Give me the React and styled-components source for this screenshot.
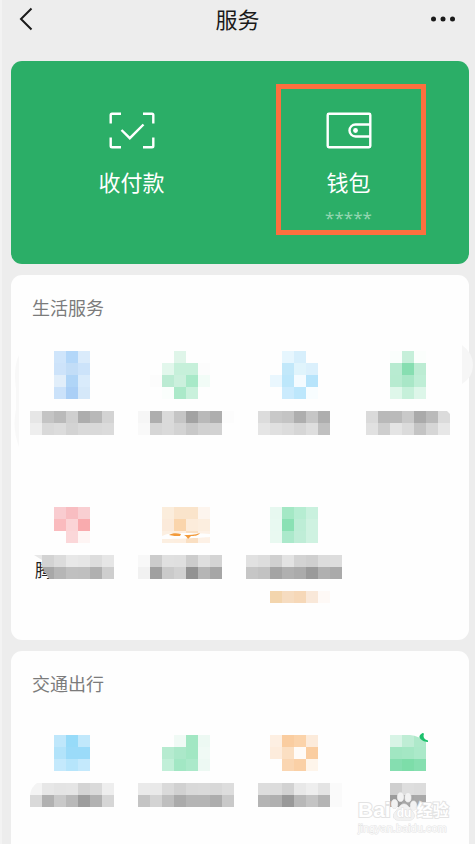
import React from 'react'
import styled, { createGlobalStyle } from 'styled-components'

const colors = {
  page: '#ededed',
  card: '#fefefe',
  green: '#2bae67',
  highlight: '#fd6f3e',
  text: '#1a1a1a',
  muted: '#7b7b7b',
  masked: '#93d6b0',
}

const CELL = 12

const GlobalStyle = createGlobalStyle`
  * {
    box-sizing: border-box;
  }

  body {
    margin: 0;
    background: ${colors.page};
    font-family: 'Noto Sans CJK SC', sans-serif;
    color: ${colors.text};
  }

  button {
    border: 0;
    padding: 0;
    background: none;
    font: inherit;
    color: inherit;
    cursor: pointer;
  }
`

const Page = styled.div`
  min-height: 100vh;
  display: flex;
  flex-direction: column;
  box-shadow: inset 2px 0 #f3f3f3;
`

const TopBar = styled.header`
  display: grid;
  grid-template-columns: 48px 1fr 48px;
  align-items: start;
  height: 61px;
`

const Title = styled.h1`
  margin: 0;
  padding-top: 2px;
  font-size: 22px;
  font-weight: 400;
  line-height: 32px;
  text-align: center;
`

const BarButton = styled.button`
  display: flex;
  align-items: center;
  justify-content: ${(props) => (props.$end ? 'flex-end' : 'flex-start')};
  height: 37px;
  padding: ${(props) => (props.$end ? '0 20px 0 0' : '0 0 0 18px')};
`

const Content = styled.main`
  flex: 1;
  display: flex;
  flex-direction: column;
  gap: 11px;
  padding: 0 6px 0 11px;
`

const PayCard = styled.section`
  display: grid;
  grid-template-columns: 1fr 1fr;
  padding: 48px 12px 34px;
  border-radius: 11px;
  background: ${colors.green};
  color: #fff;
`

const PayItem = styled.button`
  position: relative;
  display: flex;
  flex-direction: column;
  align-items: center;

  svg {
    display: block;
  }
`

const PayLabel = styled.span`
  margin-top: 12px;
  font-size: 22px;
  line-height: 32px;
`

const Balance = styled.span`
  margin-top: 9px;
  font-family: 'Noto Sans', sans-serif;
  font-size: 17px;
  line-height: 24px;
  color: ${colors.masked};
`

/* Frame that points at the wallet entry */
const Highlight = styled.span`
  position: absolute;
  top: -25px;
  left: 50%;
  width: 150px;
  height: 151px;
  margin-left: -73px;
  border: 5px solid ${colors.highlight};
  pointer-events: none;
`

const Card = styled.section`
  position: relative;
  flex: ${(props) => (props.$last ? '1' : 'none')};
  padding: 20px 19px 1px 7px;
  border-radius: ${(props) => (props.$last ? '11px 11px 0 0' : '11px')};
  background: ${colors.card};
`

const CardTitle = styled.h2`
  margin: 0 0 ${(props) => (props.$last ? '28px' : '32px')} 14px;
  font-size: 18px;
  font-weight: 400;
  line-height: 24px;
  color: ${colors.muted};
`

const ServiceGrid = styled.div`
  display: grid;
  grid-template-columns: repeat(4, 1fr);
`

const ServiceButton = styled.button`
  position: relative;
  min-width: 0;
`

const Mosaic = styled.svg`
  display: block;
  width: 100%;
  height: auto;
  overflow: visible;
`

const EdgeBlur = styled.svg`
  position: absolute;
  top: 70px;
  ${(props) => (props.$right ? 'right: -4px;' : 'left: 2px;')}
`

const Watermark = styled.div`
  position: absolute;
  top: 64px;
  left: 16px;
  display: flex;
  flex-direction: column;
  align-items: flex-start;
  color: #fff;
  -webkit-text-stroke: 2px #e3e3e3;
  paint-order: stroke fill;
  font-family: 'Liberation Sans', 'Noto Sans CJK SC', sans-serif;
  white-space: nowrap;
  pointer-events: none;
`

const WatermarkRow = styled.div`
  display: flex;
  align-items: flex-end;
  height: 34px;
  font-size: 21px;
  line-height: 20px;

  b {
    line-height: 22px;
  }

  span {
    font-size: 16px;
    font-weight: 700;
  }
`

const WatermarkUrl = styled.div`
  font-size: 11px;
  line-height: 14px;
  color: #fcfcfc;
  -webkit-text-stroke: 1px #e4e4e4;
`

// Each mosaic row: [row index, first column, colours]
const lifeServices = [
  {
    name: '生活服务 1',
    rows: [
      [0, 3, ['#cfe5fb', '#b3d7f9', '#daebfb']],
      [1, 3, ['#cde3fa', '#c2ddf7', '#cce3fa']],
      [2, 3, ['#e1eefa', '#b0d5f7', '#d9ebfb']],
      [3, 3, ['#cbe2fa', '#aacff6', '#d5e8f9']],
      [5, 1, ['#e6e6e6', '#c4c4c4', '#bababa', '#cfcfcf', '#adadad', '#b8b8b8', '#d3d3d3']],
      [6, 1, ['#eeeeee', '#d9d9d9', '#dcdcdc', '#d3d3d3', '#d9d9d9', '#d9d9d9', '#dbdbdb']],
    ],
  },
  {
    name: '生活服务 2',
    rows: [
      [0, 4, ['#dff5e9']],
      [1, 3, ['#e2f7ec', '#c6f0da', '#c6f0da', '#fcfcfc']],
      [2, 2, ['#fcfcfc', '#bbebd3', '#cbf0dd', '#a8e9c8', '#f2fcf7']],
      [3, 3, ['#fafefc', '#abe9c9', '#c9f1dc']],
      [5, 1, ['#f6f6f6', '#aeaeae', '#dadada', '#c5c5c5', '#a2a2a2', '#b9b9b9', '#aeaeae', '#fcfcfc']],
      [6, 1, ['#f9f9f9', '#d6d6d6', '#dadada', '#d3d3d3', '#c8c8c8', '#d1d1d1', '#d2d2d2']],
    ],
  },
  {
    name: '生活服务 3',
    rows: [
      [0, 4, ['#e6f6fe', '#d7effc']],
      [1, 4, ['#c2e8fa', '#e0f4fc', '#dbf0fc']],
      [2, 3, ['#eaf7fe', '#bde7fb', '#f4fbff', '#b7e4fb']],
      [3, 4, ['#cbebfd', '#bde7fc', '#f8fdff']],
      [5, 2, ['#dcdcdc', '#c8c8c8', '#c4c4c4', '#aeaeae', '#c6c6c6', '#aeaeae']],
      [6, 2, ['#e5e5e5', '#e0e0e0', '#dcdcdc', '#d6d6d6', '#dedede', '#c0c0c0']],
    ],
  },
  {
    name: '生活服务 4',
    rows: [
      [0, 4, ['#fafefc', '#c6efda', '#fbfefc']],
      [1, 4, ['#b8ebd1', '#87deb1', '#bcecd3']],
      [2, 4, ['#b7ebd0', '#a9e7c7', '#bfeed6']],
      [3, 4, ['#dff7ea', '#c6f0da', '#ddf6e9']],
      [5, 2, ['#dadada', '#b9b9b9', '#bababa', '#c9c9c9', '#aaaaaa', '#bababa', '#dbdbdb']],
      [6, 2, ['#e1e1e1', '#cecece', '#e4e4e4', '#dbdbdb', '#c4c4c4', '#d6d6d6', '#e7e7e7']],
    ],
    cut: <path d="M105 60h3v3z" fill={colors.card} />,
  },
  {
    name: '腾',
    under: (
      <text x="17" y="82" fontSize="18" fill="#222">腾</text>
    ),
    rows: [
      [1, 3, ['#f9ccd0', '#f8bdc1', '#f9cfd2']],
      [2, 3, ['#fabbbe', '#fbd4d6', '#f9abae']],
      [3, 4, ['#fbd7d9', '#fef5f4']],
      [5, 2, ['#d3d3d3', '#dcdcdc', '#e8e8e8', '#e6e6e6', '#dddddd', '#e6e6e6']],
      [6, 3, ['#b6b6b6', '#c0c0c0', '#bfbfbf', '#b0b0b0', '#cecece']],
    ],
    cut: (
      <>
        <path d="M24 72h12v12h-5z" fill="#a8a8a8" />
        <path d="M16 60h8v5z" fill="#e8e8e8" />
      </>
    ),
  },
  {
    name: '生活服务 6',
    rows: [
      [1, 3, ['#fbeddc', '#fae4cb', '#fae4cb', '#fdf5ee']],
      [2, 3, ['#fbeada', '#fad5ac', '#fcecdb', '#fceedf']],
      [3, 3, ['#fcefe1', '#fdeedf', '#fadfc2', '#fdf1e6']],
      [5, 1, ['#f8f8f8', '#cccccc', '#e0e0e0', '#dfdfdf', '#cccccc', '#dedede', '#d4d4d4']],
      [6, 1, ['#f1f1f1', '#a0a0a0', '#cacaca', '#d1d1d1', '#929292', '#b5b5b5', '#a6a6a6']],
    ],
    cut: (
      <>
        <path d="M36 41c6-3 12-3 18-3 8 0 20 0 30 1v3c-10 1-36 2-48 2z" fill={colors.card} />
        <path d="M43 40c3-2 8-2 12-1l-1 2c-4 0-7 0-11-1z" fill="#f29a3a" />
        <path d="M58 40c5 0 11 0 16-2-2 3-6 3-9 3l-3 3c-1-2-2-3-4-4z" fill="#f29a3a" />
      </>
    ),
  },
  {
    name: '生活服务 7',
    rows: [
      [1, 3, ['#e7f8f0', '#a4e8c5', '#b6edd2', '#c9f1de']],
      [2, 3, ['#e8f9f1', '#8ae1b4', '#bdedd6', '#cff2e1']],
      [3, 3, ['#e9f9f1', '#abe9cb', '#bfedd7', '#cff2e1']],
      [5, 1, ['#e1e1e1', '#dddddd', '#d0d0d0', '#e3e3e3', '#d3d3d3', '#cfcfcf', '#dcdcdc', '#dddddd']],
      [6, 1, ['#c6c6c6', '#c2c2c2', '#a4a4a4', '#b0b0b0', '#ababab', '#9a9a9a', '#b0b0b0', '#aaaaaa']],
      [8, 3, ['#f3d5ad', '#f6dcc0', '#f6d8b8', '#f9e8d9', '#fef9f6']],
    ],
  },
]

const travelServices = [
  {
    name: '交通出行 1',
    rows: [
      [1, 3, ['#bfe7fb', '#97dbf9', '#c1e8fb']],
      [2, 3, ['#b2e3fa', '#9bdbf9', '#9bdbf9']],
      [3, 3, ['#c4e9fc', '#b6e5fb', '#c4e9fc']],
      [5, 1, ['#f4f4f4', '#e7e7e7', '#e4e4e4', '#e5e5e5', '#d4d4d4', '#dadada', '#eeeeee']],
      [6, 1, ['#d9d9d9', '#b1b1b1', '#c9c9c9', '#b9b9b9', '#9d9d9d', '#b2b2b2', '#d6d6d6']],
    ],
    cut: <path d="M12 60h7q-6 4-7 12z" fill={colors.card} />,
  },
  {
    name: '交通出行 2',
    rows: [
      [1, 4, ['#f0faf5', '#a2e7c3', '#edf9f3']],
      [2, 3, ['#b6ebd0', '#abe8c9', '#a2e7c3', '#f0faf5']],
      [3, 3, ['#c1efd8', '#a2e7c4', '#abe9ca', '#edf9f3']],
      [5, 1, ['#eaeaea', '#e9e9e9', '#dadada', '#d1d1d1', '#d9d9d9', '#dadada', '#d8d8d8', '#dddddd']],
      [6, 1, ['#c4c4c4', '#d3d3d3', '#bfbfbf', '#ababab', '#b5b5b5', '#b5b5b5', '#adadad', '#c9c9c9']],
    ],
  },
  {
    name: '交通出行 3',
    rows: [
      [1, 3, ['#fdefe2', '#facda0', '#fbd3aa', '#fcebdb']],
      [2, 3, ['#fdecdc', '#fbdfc2', '#fffbf7', '#facda0']],
      [3, 4, ['#fad6b2', '#fad0a6', '#fef5eb']],
      [5, 2, ['#dddddd', '#dcdcdc', '#d2d2d2', '#e8e8e8', '#eeeeee', '#e4e4e4', '#fafafa']],
      [6, 2, ['#b4b4b4', '#b0b0b0', '#999999', '#b8b8b8', '#c4c4c4', '#b4b4b4', '#fafafa']],
    ],
  },
  {
    name: '交通出行 4',
    rows: [
      [1, 4, ['#d8f4e6', '#bfedd5', '#aee9ca']],
      [2, 4, ['#a1e6c2', '#a4e7c4', '#abe9c9']],
      [3, 4, ['#85deb0', '#7ddda9', '#86dfb0']],
      [5, 4, ['#cfcfcf', '#dedede', '#dcdcdc']],
      [6, 4, ['#9c9c9c', '#a6a6a6', '#a9a9a9']],
    ],
    cut: (
      <>
        <path d="M68 12h16v7q-7-6-16-7z" fill={colors.card} />
        <path d="M80.500 10q-5 3-2 6 3 3 7.500 3v-1.500q-6-1.500-4-7z" fill="#1cc06c" />
      </>
    ),
    watermark: true,
  },
]

function BackIcon() {
  return (
    <svg width="16" height="24" viewBox="0 0 16 24" fill="none" stroke={colors.text} strokeWidth="2">
      <path d="M13.5 1.5 3 12l10.500 10.500" />
    </svg>
  )
}

function MoreIcon() {
  return (
    <svg width="24" height="6" viewBox="0 0 24 6" fill={colors.text}>
      <circle cx="2.500" cy="3" r="2.500" />
      <circle cx="12" cy="3" r="2.500" />
      <circle cx="21.500" cy="3" r="2.500" />
    </svg>
  )
}

function PayIcon() {
  return (
    <svg width="46" height="44" viewBox="0 0 46 44" fill="none" stroke="#fff" strokeWidth="2.400">
      <path d="M12 4.700H3q-1.300 0-1.300 1.300v8.500M34 4.700h9q1.300 0 1.300 1.300v8.500M12 38.300H3q-1.300 0-1.300-1.300v-8.500M34 38.300h9q1.300 0 1.300-1.300v-8.500" />
      <path d="m12.500 21 8.300 8.200L34.500 15.500" />
    </svg>
  )
}

function WalletIcon() {
  return (
    <svg width="46" height="44" viewBox="0 0 46 44" fill="none" stroke="#fff" strokeWidth="2.400">
      <rect x="1.700" y="4.700" width="42.600" height="33.600" rx="1.200" />
      <path d="M44 15.500H29.500a6 6 0 0 0 0 12H44" />
      <circle cx="29.500" cy="21.500" r="2.400" fill="#fff" stroke="none" />
    </svg>
  )
}

function Paw() {
  return (
    <svg width="26" height="30" viewBox="0 0 26 30" fill="#f2f2f2" stroke="#dedede">
      <ellipse cx="3.500" cy="13" rx="3" ry="4.500" />
      <ellipse cx="9.500" cy="6" rx="3" ry="4.500" />
      <ellipse cx="17" cy="6.500" rx="3" ry="4.500" />
      <ellipse cx="22.500" cy="14.500" rx="3" ry="4.500" />
      <path d="M13 13c4 0 5 4 8 7 4 4 2 9-2 9-3 0-9 0-12 0-5 0-6-5-2-9 3-3 4-7 8-7z" />
      <text x="13" y="26" textAnchor="middle" fontSize="12" fontWeight="700" fill="#fff">du</text>
    </svg>
  )
}

function Service({ service, lines }) {
  return (
    <ServiceButton aria-label={service.name}>
      <Mosaic viewBox={`0 0 108 ${lines * CELL}`}>
        {service.under}
        <g shapeRendering="crispEdges">
          {service.rows.map(([row, start, cells]) =>
            cells.map((fill, i) => (
              <rect
                key={`${row}-${i}`}
                x={(start + i) * CELL}
                y={row * CELL}
                width={CELL}
                height={CELL}
                fill={fill}
              />
            ))
          )}
        </g>
        {service.cut}
      </Mosaic>
      {service.watermark && (
        <Watermark>
          <WatermarkRow>
            <b>Bai</b>
            <Paw />
            <span>经验</span>
          </WatermarkRow>
          <WatermarkUrl>jingyan.baidu.com</WatermarkUrl>
        </Watermark>
      )}
    </ServiceButton>
  )
}

function ServiceCard({ title, services, lines, last, children }) {
  return (
    <Card $last={last}>
      {children}
      <CardTitle $last={last}>{title}</CardTitle>
      <ServiceGrid>
        {services.map((service) => (
          <Service key={service.name} service={service} lines={lines} />
        ))}
      </ServiceGrid>
    </Card>
  )
}

const App = () => {
  return (
    <>
      <GlobalStyle />
      <Page>
        <TopBar>
          <BarButton aria-label="返回">
            <BackIcon />
          </BarButton>
          <Title>服务</Title>
          <BarButton $end aria-label="更多">
            <MoreIcon />
          </BarButton>
        </TopBar>
        <Content>
          <PayCard>
            <PayItem>
              <PayIcon />
              <PayLabel>收付款</PayLabel>
            </PayItem>
            <PayItem>
              <WalletIcon />
              <PayLabel>钱包</PayLabel>
              <Balance>*****</Balance>
              <Highlight />
            </PayItem>
          </PayCard>
          <ServiceCard title="生活服务" services={lifeServices} lines={12}>
            <EdgeBlur width="6" height="104" viewBox="0 0 6 104">
              <path d="M6 10Q0 22 3 44v20Q-1 84 6 102z" fill="#f8f8f8" />
            </EdgeBlur>
            <EdgeBlur $right width="11" height="40" viewBox="0 0 11 40">
              <path d="M0 0Q11 8 11 20T0 39z" fill="#f6f6f6" />
            </EdgeBlur>
          </ServiceCard>
          <ServiceCard title="交通出行" services={travelServices} lines={9} last />
        </Content>
      </Page>
    </>
  )
}

export default App
